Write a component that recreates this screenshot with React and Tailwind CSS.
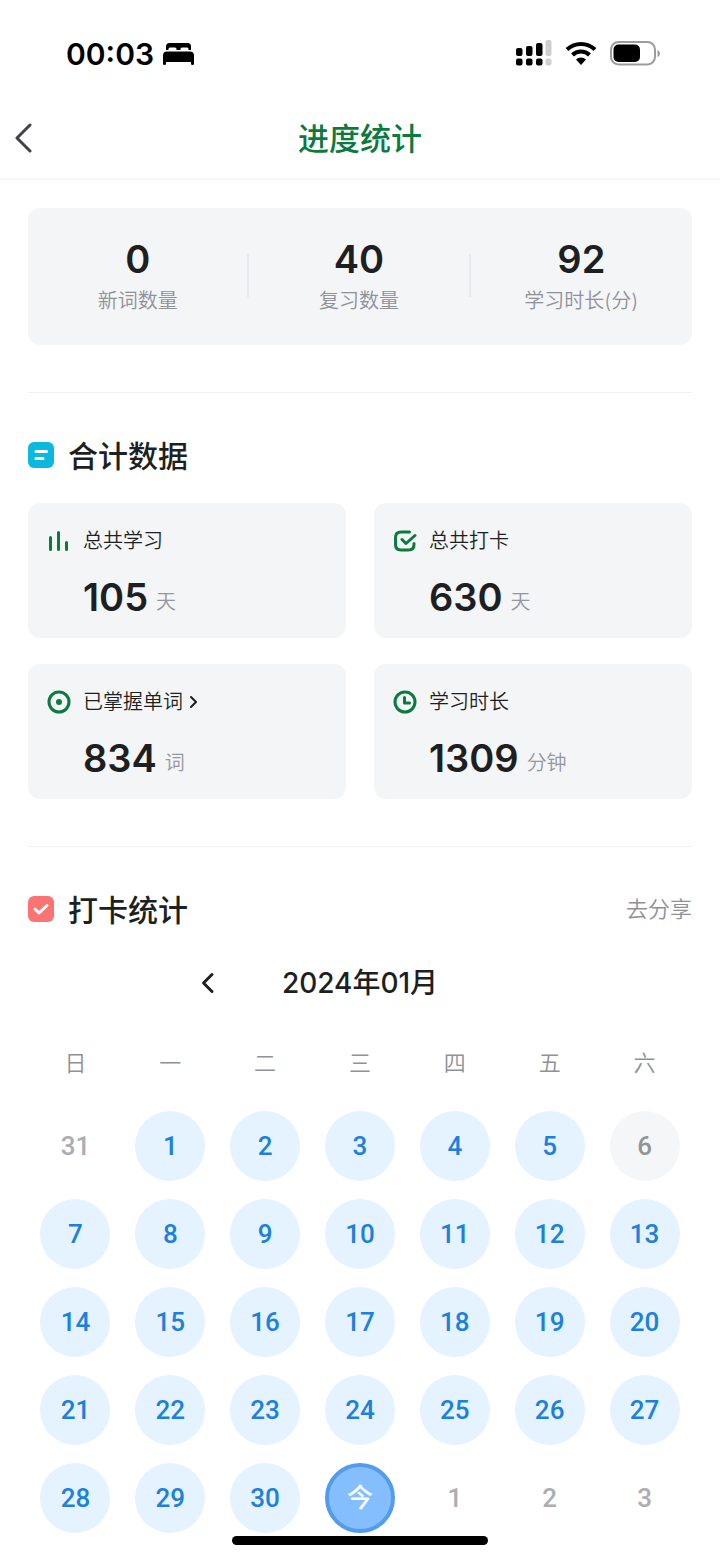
const summary = [
  { value: "0", label: "新词数量" },
  { value: "40", label: "复习数量" },
  { value: "92", label: "学习时长(分)" },
]

const totals = [
  { icon: BarsIcon, label: "总共学习", value: "105", unit: "天" },
  { icon: CheckInIcon, label: "总共打卡", value: "630", unit: "天" },
  { icon: TargetIcon, label: "已掌握单词", value: "834", unit: "词", link: true },
  { icon: ClockIcon, label: "学习时长", value: "1309", unit: "分钟" },
]

const weekdays = ["日", "一", "二", "三", "四", "五", "六"]

const dayStyles = {
  checked: "bg-[#e5f2ff] text-[#1c80dd]",
  missed: "bg-[#f5f6f7] text-[#929497]",
  outside: "text-[#abadb0]",
  today: "border-4 border-[#519ced] bg-[#85beff] text-white",
}

// January 2024, padded with the days around it
const days = [
  { day: 31, type: "outside" },
  ...Array.from({ length: 30 }, (_, i) => ({
    day: i + 1,
    type: i + 1 === 6 ? "missed" : "checked",
  })),
  { day: "今", type: "today" },
  { day: 1, type: "outside" },
  { day: 2, type: "outside" },
  { day: 3, type: "outside" },
]

const weeks = [0, 7, 14, 21, 28].map((start) => days.slice(start, start + 7))

function App() {
  return (
    <div className="min-h-screen bg-white font-[Inter,'Noto_Sans_CJK_SC',sans-serif] text-[#1d1f22]">
      <StatusBar />

      <header className="grid h-[82px] grid-cols-[48px_1fr_48px] items-center border-b-2 border-[#f6f6f7]">
        <button type="button" aria-label="返回" className="flex h-12 items-center pl-[14px] text-[#414245]">
          <svg width="18" height="30" viewBox="0 0 18 30" fill="none" stroke="currentColor" strokeWidth="3" strokeLinecap="round" strokeLinejoin="round">
            <path d="M16 2 3 15l13 13" />
          </svg>
        </button>
        <h1 className="pt-[2px] text-center text-[31px] leading-[48px] font-medium text-[#0b7a3e]">
          进度统计
        </h1>
      </header>

      <main className="px-7 pt-7">
        <section className="grid grid-cols-3 items-center rounded-xl bg-[#f4f5f7] pt-[27px] pb-[29px]">
          {summary.map((item, index) => (
            <div key={item.label} className="flex items-center">
              <div className="flex-1 text-center">
                <p className="text-[38px] leading-[48px] font-semibold">{item.value}</p>
                <p className="mt-[3px] text-[20px] leading-[30px] font-[350] text-[#8f9199]">
                  {item.label}
                </p>
              </div>
              {index < summary.length - 1 && <div className="h-[43px] w-[2px] bg-[#e8e9ec]" />}
            </div>
          ))}
        </section>

        <hr className="mt-[47px] border-[#f1f1f3]" />

        <section className="mt-[38px]">
          <SectionTitle icon={<NoteBadge />} title="合计数据" />
          <div className="mt-6 grid grid-cols-2 gap-x-7 gap-y-[26px]">
            {totals.map((item) => (
              <TotalCard key={item.label} {...item} />
            ))}
          </div>
        </section>

        <hr className="mt-[47px] border-[#f1f1f3]" />

        <section className="mt-[38px]">
          <div className="flex items-center justify-between">
            <SectionTitle icon={<CheckBadge />} title="打卡统计" />
            <a href="#share" className="text-[22px] leading-[32px] font-[350] text-[#8f9196]">
              去分享
            </a>
          </div>

          <div className="mt-[26px] flex items-center justify-center gap-[66px]">
            <button type="button" aria-label="上个月" className="flex h-12 w-[15px] items-center">
              <svg width="15" height="24" viewBox="0 0 15 24" fill="none" stroke="currentColor" strokeWidth="3" strokeLinecap="round" strokeLinejoin="round">
                <path d="M11 3.500 2.500 12l8.500 8.500" />
              </svg>
            </button>
            <h3 className="text-[28px] leading-[48px] font-medium">2024年01月</h3>
            <div className="w-[15px]" />
          </div>

          <table className="mt-10 w-full table-fixed">
            <thead>
              <tr>
                {weekdays.map((name) => (
                  <th key={name} className="p-0 pb-8 text-center text-[22px] leading-[32px] font-[350] text-[#8f9196]">
                    {name}
                  </th>
                ))}
              </tr>
            </thead>
            <tbody>
              {weeks.map((week, row) => (
                <tr key={row} className="group">
                  {week.map(({ day, type }) => (
                    <td key={day} className="p-0 pb-[18px] group-last:pb-0">
                      <button
                        type="button"
                        className={`mx-auto flex size-[70px] items-center justify-center rounded-full font-[Roboto,'Noto_Sans_CJK_SC',sans-serif] text-[26px] font-medium ${dayStyles[type]}`}
                      >
                        {day}
                      </button>
                    </td>
                  ))}
                </tr>
              ))}
            </tbody>
          </table>
        </section>
      </main>

      <div className="mt-[3px] flex justify-center pb-[15px]">
        <div className="h-[9px] w-64 rounded-full bg-black" />
      </div>
    </div>
  )
}

function StatusBar() {
  return (
    <div className="flex h-[98px] items-center justify-between pr-[60px] pb-[8px] pl-[66px] text-black">
      <div className="flex items-center gap-2 pt-[18px]">
        <span className="text-[30px] leading-[40px] font-semibold">00:03</span>
        <svg width="33" height="24" viewBox="0 0 33 24" fill="currentColor">
          <path d="M4 8V4.500Q4 1 7.500 1h18Q29 1 29 4.500V8h-2.500V7q0-1.500-1.500-1.500h-5q-1.500 0-1.500 1.500v1h-4V7q0-1.500-1.500-1.500H8Q6.500 5.500 6.500 7v1Z" />
          <path d="M1 13.500q0-4 4-4h23q4 0 4 4v8.500q0 1-1.500 1T29 22v-2H4v2q0 1-1.500 1T1 22Z" />
        </svg>
      </div>

      <div className="flex items-center pt-[16px]">
        <svg width="36" height="26" viewBox="0 0 36 26" fill="currentColor">
          <rect x="0" y="8" width="6.500" height="8" rx="2" />
          <rect x="10" y="6" width="6.500" height="10" rx="2" />
          <rect x="20" y="3" width="6.500" height="13" rx="2" />
          <rect x="0" y="18.500" width="6.500" height="7" rx="2" />
          <rect x="10" y="18.500" width="6.500" height="7" rx="2" />
          <rect x="20" y="18.500" width="6.500" height="7" rx="2" />
          <g fill="#cfcfcf">
            <rect x="29.500" y="0" width="6" height="16" rx="2" />
            <rect x="29.500" y="18.500" width="6" height="7" rx="2" />
          </g>
        </svg>
        <svg className="ml-[13px]" width="32" height="24" viewBox="0 0 32 24">
          <g fill="none" stroke="currentColor" strokeWidth="4">
            <path d="M2 8.500Q8 3 16 3t14 5.500" />
            <path d="M7.500 14Q11 10.500 16 10.500T24.500 14" />
          </g>
          <path d="M16 24l-5-5.500Q13 16.500 16 16.500t5 2Z" fill="currentColor" />
        </svg>
        <svg className="ml-[13px]" width="50" height="25" viewBox="0 0 50 25">
          <rect x="1" y="1" width="44" height="22.500" rx="7.500" fill="none" stroke="#9c9c9c" strokeWidth="2" />
          <rect x="3.500" y="3.500" width="26.500" height="17.500" rx="5" fill="currentColor" />
          <path d="M47.500 9q2.500 1 2.500 3.500T47.500 16Z" fill="#9c9c9c" />
        </svg>
      </div>
    </div>
  )
}

function SectionTitle({ icon, title }) {
  return (
    <div className="flex items-center gap-[14px]">
      {icon}
      <h2 className="pt-[2px] text-[30px] leading-[46px] font-medium">{title}</h2>
    </div>
  )
}

function TotalCard({ icon: Icon, label, value, unit, link }) {
  const heading = (
    <>
      {label}
      {link && (
        <svg width="8" height="14" viewBox="0 0 8 14" fill="none" stroke="currentColor" strokeWidth="2" strokeLinecap="round" strokeLinejoin="round">
          <path d="m1 2 5 5-5 5" />
        </svg>
      )}
    </>
  )

  return (
    <div className="rounded-xl bg-[#f4f5f7] pt-[23px] pb-[17px] pl-[19px]">
      <div className="flex items-center gap-3 text-[20px] leading-[30px] font-[350]">
        <Icon />
        {link ? (
          <a href="#words" className="flex items-center gap-[7px]">
            {heading}
          </a>
        ) : (
          <p>{heading}</p>
        )}
      </div>
      <div className="mt-[17px] flex items-end gap-2 pl-9">
        <p className="text-[38px] leading-[48px] font-semibold">{value}</p>
        <span className="pb-1 text-[20px] leading-[30px] font-[350] text-[#9597a0]">{unit}</span>
      </div>
    </div>
  )
}

function BarsIcon() {
  return (
    <svg width="24" height="24" viewBox="0 0 24 24" fill="none" stroke="#0b7a3e" strokeWidth="3" strokeLinecap="round">
      <path d="M3.500 8.500v12M11.500 3.500v17M19.500 13.500v7" />
    </svg>
  )
}

function CheckInIcon() {
  return (
    <svg width="24" height="24" viewBox="0 0 24 24" fill="none" stroke="#0b7a3e" strokeWidth="3" strokeLinecap="round" strokeLinejoin="round">
      <path d="M16.500 3H8Q2.500 3 2.500 8.500v7Q2.500 21 8 21h7.500q5.500 0 5.500-5.500v-1" />
      <path d="m9 10.500 4 4L22 6.500" />
    </svg>
  )
}

function TargetIcon() {
  return (
    <svg width="24" height="24" viewBox="0 0 24 24">
      <circle cx="12" cy="12" r="10" fill="none" stroke="#0b7a3e" strokeWidth="3" />
      <circle cx="12" cy="12" r="3" fill="#0b7a3e" />
    </svg>
  )
}

function ClockIcon() {
  return (
    <svg width="24" height="24" viewBox="0 0 24 24" fill="none" stroke="#0b7a3e" strokeWidth="3" strokeLinecap="round" strokeLinejoin="round">
      <circle cx="12" cy="12" r="10" />
      <path d="M11.500 7.500v5.500h5" />
    </svg>
  )
}

function NoteBadge() {
  return (
    <svg width="26" height="26" viewBox="0 0 26 26" fill="none">
      <rect width="26" height="26" rx="6" fill="#0cb9de" />
      <path d="M8 9.500h10.500M8 16.500h7" stroke="white" strokeWidth="3" strokeLinecap="round" />
    </svg>
  )
}

function CheckBadge() {
  return (
    <svg width="26" height="26" viewBox="0 0 26 26" fill="none">
      <rect width="26" height="26" rx="6" fill="#fb7373" />
      <path d="m7 13 4 4 8-7.500" stroke="white" strokeWidth="3" strokeLinecap="round" strokeLinejoin="round" />
    </svg>
  )
}

export default App
